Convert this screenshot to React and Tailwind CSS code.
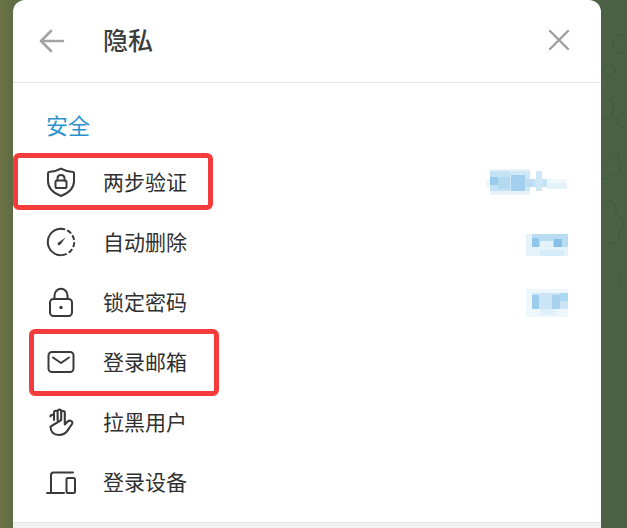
import React from 'react';

// telegram style line icons, all on a 30x30 box
const ShieldIcon = () => (
  <svg width="30" height="30" viewBox="0 0 30 30" fill="none" stroke="#3a3a3a" strokeWidth="2" strokeLinecap="round" strokeLinejoin="round">
    <path d="M15 1.6 C18.5 3.6 22.5 4.6 27 5 C27.6 5.1 28 5.5 28 6.1 V14 C28 21 23 26 15 29 C7 26 2 21 2 14 V6.1 C2 5.5 2.4 5.1 3 5 C7.5 4.6 11.5 3.6 15 1.6 Z" />
    <rect x="9.5" y="13.5" width="11" height="7.5" rx="1.6" />
    <path d="M11.5 13.5 V11.5 C11.5 9.4 13 8 15 8 C17 8 18.5 9.4 18.5 11.5 V13.5" />
  </svg>
);

const TimerIcon = () => (
  <svg width="30" height="30" viewBox="0 0 30 30" fill="none" stroke="#3a3a3a" strokeWidth="2" strokeLinecap="round">
    <path d="M15 1.8 A13.2 13.2 0 1 0 15 28.2" />
    <path d="M15 1.8 A13.2 13.2 0 0 1 15 28.2" strokeDasharray="3.4 3.8" />
    <path d="M11.6 17 C11.6 16.4 12 16 12.4 15.6 L19.6 10.4 L14.4 17.6 C13.4 18.8 11.6 18.4 11.6 17 Z" fill="#3a3a3a" stroke="none" />
  </svg>
);

const LockIcon = () => (
  <svg width="30" height="30" viewBox="0 0 30 30" fill="none" stroke="#3a3a3a" strokeWidth="2" strokeLinecap="round" strokeLinejoin="round">
    <rect x="4" y="12" width="22" height="17" rx="3.5" />
    <path d="M8.5 12 V8.5 C8.5 4.6 11.4 1.8 15 1.8 C18.6 1.8 21.5 4.6 21.5 8.5 V12" />
    <circle cx="15" cy="20.5" r="1.7" fill="#3a3a3a" stroke="none" />
  </svg>
);

const MailIcon = () => (
  <svg width="30" height="30" viewBox="0 0 30 30" fill="none" stroke="#3a3a3a" strokeWidth="2" strokeLinecap="round" strokeLinejoin="round">
    <rect x="2.5" y="5" width="25" height="20" rx="3.5" />
    <path d="M7 10.5 L15 16 L23 10.5" />
  </svg>
);

const HandIcon = () => (
  <svg width="30" height="30" viewBox="0 0 30 30" fill="none" stroke="#3a3a3a" strokeWidth="2.1" strokeLinecap="round" strokeLinejoin="round">
    <path d="M4.5 9.5 C4.5 7.2 8 7.2 8 9.5 V13 M8 13 V5.6 C8 3.2 11.6 3.2 11.6 5.6 V13 M11.6 13 V4.4 C11.6 2 15.2 2 15.2 4.4 V13 M15.2 13 V5.6 C15.2 3.4 18.8 3.4 18.8 5.6 V17.4 L21.6 14.6 C24 12.6 27.6 14.4 26 17 L21.6 23.4 C19.6 26.8 17 28 13 28 C7.6 28 4.5 25 4.5 19.6 Z" />
  </svg>
);

const DevicesIcon = () => (
  <svg width="30" height="30" viewBox="0 0 30 30" fill="none" stroke="#3a3a3a" strokeWidth="2" strokeLinecap="round" strokeLinejoin="round">
    <path d="M1 26 H18 M5 26 V8 C5 6.5 5.8 5.5 7.5 5.5 H27" />
    <rect x="20.5" y="11" width="8.5" height="15" rx="1.5" />
  </svg>
);

// the blurred out values on the right of the rows
const Smudge = ({ width, cells, className }) => (
  <svg className={className} width={width} height="34" viewBox={`0 0 ${width} 34`}>
    {cells.map(([x, y, w, h, c], i) => (
      <rect key={i} x={x} y={y} width={w} height={h} fill={c} />
    ))}
  </svg>
);

const smudgeLong = [
  [2, 14, 80, 8, '#eef7fc'], [6, 4, 40, 26, '#e6f3fb'], [6, 6, 20, 20, '#c4e2f4'], [26, 6, 20, 20, '#cfe8f6'],
  [6, 12, 8, 8, '#98cbec'], [14, 12, 12, 12, '#b3d9f1'], [27, 10, 14, 16, '#a2d0ee'], [41, 14, 8, 8, '#bcddf2'], [49, 14, 14, 8, '#c6e3f5'],
  [52, 6, 6, 20, '#cfe8f6'], [63, 18, 20, 6, '#e4f2fa'],
];
const smudgeShort = [
  [0, 6, 42, 22, '#e4f2fa'], [6, 6, 36, 13, '#b9dcf3'], [6, 10, 7, 9, '#8fc6ea'], [28, 11, 8, 8, '#85c0e8'], [14, 13, 13, 6, '#e2f1fa'], [14, 22, 24, 6, '#d6ebf8'],
];
const smudgeLock = [
  [0, 4, 42, 28, '#eef7fc'], [6, 8, 36, 16, '#cce5f6'], [6, 10, 7, 14, '#9dcdec'], [26, 10, 8, 14, '#a6d2ee'], [34, 8, 8, 8, '#a9d8f0'], [14, 24, 16, 6, '#dfeffa'],
];

const rows = [
  { label: '两步验证', icon: <ShieldIcon />, smudge: <Smudge width={84} cells={smudgeLong} className="blur-[0.5px]" /> },
  { label: '自动删除', icon: <TimerIcon />, smudge: <Smudge width={42} cells={smudgeShort} className="blur-[0.5px] translate-y-[3px]" /> },
  { label: '锁定密码', icon: <LockIcon />, smudge: <Smudge width={42} cells={smudgeLock} className="blur-[0.5px]" /> },
  { label: '登录邮箱', icon: <MailIcon /> },
  { label: '拉黑用户', icon: <HandIcon /> },
  { label: '登录设备', icon: <DevicesIcon /> },
];

export default function App() {
  return (
    <div
      className="relative w-[627px] h-[528px] overflow-hidden pl-[13px] bg-[linear-gradient(90deg,#6c7345_0%,#5f6c44_2%,#4b6344_90%)]"
      style={{ fontFamily: '"Noto Sans CJK SC", "Liberation Sans", sans-serif' }}
    >
      {/* faint chat wallpaper doodles on the right */}
      <svg className="absolute right-0 top-0" width="26" height="528" viewBox="0 0 26 528" fill="none" stroke="#415a3c" strokeWidth="1">
        <circle cx="22" cy="44" r="10" />
        <circle cx="8" cy="70" r="6" />
        <path d="M2 105 C10 95 14 100 12 112 C10 120 4 122 2 118" />
        <circle cx="24" cy="120" r="8" />
        <path d="M0 165 L16 150 L20 172 L0 180" />
        <path d="M2 205 C10 195 18 205 14 215 C22 215 26 225 18 232 C20 244 8 248 4 238" />
        <path d="M16 270 C22 280 20 285 14 290" />
      </svg>

      <div className="relative w-[588px] h-full bg-white rounded-t-[12px] flex flex-col">
        {/* header */}
        <div className="h-[83px] shrink-0 flex items-center border-b border-[#e4e4e4] pl-[26px] pr-[30px]">
          <svg width="26" height="24" viewBox="0 0 26 24" fill="none" stroke="#a3a3a3" strokeWidth="2.6" strokeLinecap="round" strokeLinejoin="round">
            <path d="M2 12 H24 M12 2 L2 12 L12 22" />
          </svg>
          <h1 className="ml-[38px] pb-[4px] text-[25px] leading-none font-medium text-[#3c3c3c]">隐私</h1>
          <svg className="ml-auto mr-[1px] -translate-y-[1px]" width="22" height="22" viewBox="0 0 22 22" fill="none" stroke="#a0a0a0" strokeWidth="2.4" strokeLinecap="round">
            <path d="M2 2 L20 20 M20 2 L2 20" />
          </svg>
        </div>

        {/* section */}
        <div className="flex-1">
          <h2 className="h-[69px] pt-[26px] pl-[33px] text-[22px] leading-[30px] text-[#2a93cd]">安全</h2>
          {rows.map((row) => (
            <div key={row.label} className="h-[60px] flex items-center pl-[33px] pr-[33px]">
              <span className="w-[30px] h-[30px] shrink-0">{row.icon}</span>
              <span className="ml-[27px] pb-[2px] text-[21px] leading-none text-[#2f2f2f]">{row.label}</span>
              {row.smudge && <span className="ml-auto flex">{row.smudge}</span>}
            </div>
          ))}
        </div>

        <div className="h-[6px] shrink-0 bg-[#f1f1f1] border-t border-[#e6e6e6]" />
      </div>

      {/* red annotation boxes */}
      <div className="absolute left-[13px] top-[153px] w-[200px] h-[57px] border-[5px] border-[#f53c3c] rounded-[6px]" />
      <div className="absolute left-[29px] top-[329px] w-[190px] h-[67px] border-[5px] border-[#f53c3c] rounded-[6px]" />
    </div>
  );
}
